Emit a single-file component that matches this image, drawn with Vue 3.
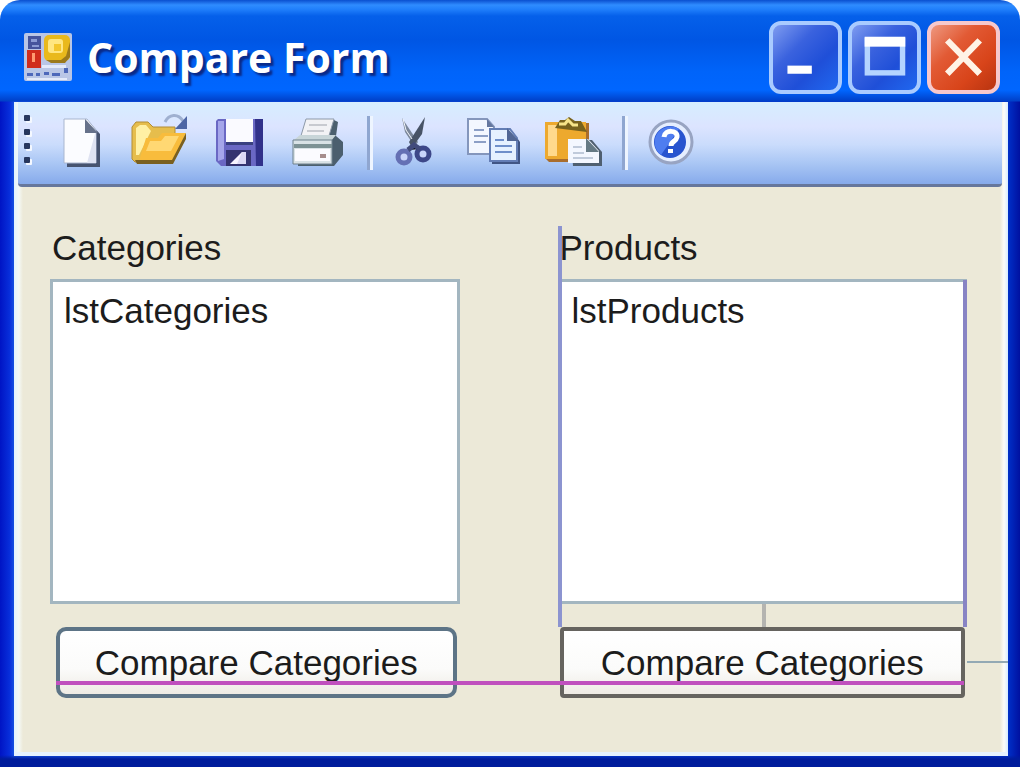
<script setup>
import { ref } from "vue";

const categories = ref(["lstCategories"]);
const products = ref(["lstProducts"]);
</script>

<template>
  <div class="window">
    <header class="title-bar">
      <svg class="app-icon" viewBox="0 0 48 48" aria-hidden="true">
        <rect width="48" height="48" rx="2" fill="#b9c6e6" />
        <rect x="4" y="3" width="13" height="13" fill="#46549c" />
        <path d="M7 6h6v3H7zM8 12h7v2H8z" fill="#8b9bd4" />
        <rect x="3" y="17" width="14" height="18" fill="#d02c1c" />
        <rect x="8" y="20" width="3" height="9" fill="#ff9a70" />
        <rect x="20" y="2" width="26" height="26" rx="5" fill="#e9b91c" />
        <path d="M22 27l5 3h14l5-6V9l-4 14-5 4z" fill="#9c7a1c" />
        <rect x="24" y="6" width="15" height="14" rx="3" fill="#ffe680" />
        <path d="M30 11h7v7h-7z" fill="#f3c62c" />
        <path
          d="M3 40h6v3H3zM12 40h4v3h-4zM20 39h5v3h-5zM28 40h8v3h-8zM40 35h4v5h-4z"
          fill="#4d68ba"
        />
        <path d="M18 32h24v3H18zM3 45h40v2H3z" fill="#e3eafa" />
      </svg>
      <h1 class="title">Compare Form</h1>
      <div class="window-controls">
        <button type="button" class="control" aria-label="Minimize">
          <svg viewBox="0 0 72 72">
            <rect x="16" y="45" width="27" height="9" fill="#fff" />
          </svg>
        </button>
        <button type="button" class="control" aria-label="Maximize">
          <svg viewBox="0 0 72 72">
            <rect
              x="17"
              y="17"
              width="39"
              height="36"
              fill="none"
              stroke="#b4d4ff"
              stroke-width="6"
            />
            <rect x="14" y="13" width="45" height="11" fill="#fff" />
          </svg>
        </button>
        <button type="button" class="control close" aria-label="Close">
          <svg viewBox="0 0 72 72">
            <path
              d="M18 17L54 54M54 17L18 54"
              stroke="#fff3e6"
              stroke-width="7"
            />
          </svg>
        </button>
      </div>
    </header>

    <div class="client">
      <div class="toolbar" role="toolbar">
        <span class="grip"><i></i><i></i><i></i><i></i></span>
        <button type="button" class="tool" aria-label="New">
          <svg viewBox="0 0 60 60">
            <path d="M16 9h22l11 12v33H16z" fill="#46536f" />
            <path d="M13 6h23l9 11v33H13z" fill="#fbfcff" stroke="#a9b6cf" />
            <path d="M36 50h9V17z" fill="#dfe3f2" />
            <path d="M34 6l13 14H34z" fill="#66718a" />
          </svg>
        </button>
        <button type="button" class="tool" aria-label="Open">
          <svg viewBox="0 0 60 60">
            <path
              d="M2 14l4-5h12l5 5h22v16L40 49H5l-3-3z"
              fill="#e6bd4c"
              stroke="#b28d34"
            />
            <path d="M6 15l4-3h6l5 6-6 12-6 12H6z" fill="#fff0a4" />
            <path d="M16 25h12l4-5h24L43 48H9z" fill="#f8bc3c" />
            <path d="M20 28h11l4-5h14l-8 15H16z" fill="#ffd873" />
            <path d="M5 47h37L56 20v6L43 51H7z" fill="#7a6020" />
            <path
              d="M35 9c4-8 13-9 18-1"
              fill="none"
              stroke="#9fb0d0"
              stroke-width="3"
            />
            <path d="M57 3v13H45z" fill="#4d65a5" />
          </svg>
        </button>
        <button type="button" class="tool" aria-label="Save">
          <svg viewBox="0 0 60 60">
            <path d="M9 6h45v47H12l-5-5V8z" fill="#6a68c4" />
            <path d="M46 6h8v47h-7z" fill="#31318a" />
            <path d="M9 8h6v38l-6 2z" fill="#a5a6ea" />
            <path d="M17 6h27v23H17z" fill="#fafaff" />
            <path d="M17 29h27v3H17z" fill="#394080" />
            <path d="M17 37h25v16H17z" fill="#34336f" />
            <path d="M33 39v12H21z" fill="#f7f4ff" />
            <path d="M33 39h4v12h-9z" fill="#dcd9f4" />
          </svg>
        </button>
        <button type="button" class="tool" aria-label="Print">
          <svg viewBox="0 0 60 60">
            <path d="M44 6l6 3-2 14 7 6v13L46 53H10v-4z" fill="#4b5f6e" />
            <path d="M18 6h28l-6 20H12z" fill="#f2f2f5" stroke="#8d99a8" />
            <path
              d="M21 12h18M19 18h17"
              stroke="#c8cad0"
              stroke-width="2"
            />
            <path d="M6 27l6-5h36l-5 6H6z" fill="#c8d5d8" />
            <path d="M5 27h39v24H5z" fill="#d9e2e6" stroke="#6f818d" />
            <path d="M6 31h38v4H6z" fill="#7d9295" />
            <path d="M7 36h35v12H7z" fill="#fbfbff" />
            <path d="M32 41h6v4h-6z" fill="#a68d8d" />
          </svg>
        </button>
        <span class="separator"></span>
        <button type="button" class="tool" aria-label="Cut">
          <svg viewBox="0 0 60 60">
            <path d="M17 5l3 14 10 15 3-5z" fill="#7b879a" />
            <path d="M40 4l-3 17-10 14-3-6z" fill="#485366" />
            <path d="M18 6l3 11 6 9" fill="none" stroke="#f2f5fa" />
            <circle
              cx="19"
              cy="44"
              r="6"
              fill="#c9d4fa"
              stroke="#6570b4"
              stroke-width="5"
            />
            <circle
              cx="38"
              cy="41"
              r="6"
              fill="#c9d4fa"
              stroke="#3d4789"
              stroke-width="5"
            />
            <path d="M23 37l6-5 6 4" stroke="#414b7c" stroke-width="5" />
          </svg>
        </button>
        <button type="button" class="tool" aria-label="Copy">
          <svg viewBox="0 0 60 60">
            <path
              d="M4 6h19l7 8v27H4z"
              fill="#f3f7ff"
              stroke="#8496bc"
              stroke-width="2"
            />
            <path d="M23 6v8h7" fill="#65779f" />
            <path
              d="M10 17h10M10 23h14M10 29h12"
              stroke="#8c9fc6"
              stroke-width="2"
            />
            <path d="M28 18h20l8 11v22H28z" fill="#405584" />
            <path
              d="M26 16h20l7 9v23H26z"
              fill="#e6f1ff"
              stroke="#637db5"
              stroke-width="2"
            />
            <path d="M43 15l12 13H43z" fill="#526795" />
            <path
              d="M31 27h9M31 33h17M31 39h17"
              stroke="#6f8fca"
              stroke-width="2"
            />
          </svg>
        </button>
        <button type="button" class="tool" aria-label="Paste">
          <svg viewBox="0 0 60 60">
            <path d="M3 10h43v39H6l-3-3z" fill="#a96d2c" />
            <path d="M2 9h41v37H2z" fill="#eda92e" />
            <path d="M5 12h9v31H5z" fill="#ffd98c" />
            <path d="M12 15l5-8h5l4-3 6 4h6l6 11z" fill="#77621d" />
            <path
              d="M16 11h6l3-4 5 5h5"
              fill="none"
              stroke="#f6e48a"
              stroke-width="3"
            />
            <path d="M28 27h21l10 12v14H30z" fill="#4f5f70" />
            <path d="M25 26h20l11 12v12H25z" fill="#f4f7ff" />
            <path d="M43 25l13 14H43z" fill="#657984" />
            <path
              d="M30 34h9M30 40h11M30 45h20"
              stroke="#c0cadb"
              stroke-width="2"
            />
          </svg>
        </button>
        <span class="separator"></span>
        <button type="button" class="tool" aria-label="Help">
          <svg viewBox="0 0 60 60">
            <circle
              cx="31"
              cy="29"
              r="21"
              fill="#e5eeff"
              stroke="#98a4c2"
              stroke-width="3"
            />
            <circle cx="30" cy="29" r="16" fill="#2854cf" />
            <path
              d="M17 21a16 16 0 0 1 22-5L21 42a16 16 0 0 1-4-21z"
              fill="#4f7df0"
            />
            <path
              d="M24 24c1-8 14-7 13 0c-1 5-6 4-6 9"
              fill="none"
              stroke="#fff"
              stroke-width="5"
            />
            <rect x="28" y="36" width="5" height="4" fill="#fff" />
          </svg>
        </button>
      </div>

      <main class="form">
        <section class="column">
          <label for="lstCategories">Categories</label>
          <select id="lstCategories" size="8" multiple>
            <option v-for="item in categories" :key="item">{{ item }}</option>
          </select>
          <button type="button" class="compare">Compare Categories</button>
        </section>
        <section class="column selected">
          <span class="guide guide-left"></span>
          <label for="lstProducts">Products</label>
          <select id="lstProducts" size="8" multiple>
            <option v-for="item in products" :key="item">{{ item }}</option>
          </select>
          <button type="button" class="compare">Compare Categories</button>
          <span class="guide guide-right"></span>
          <span class="guide guide-tick"></span>
          <span class="guide guide-margin"></span>
        </section>
        <span class="guide guide-baseline"></span>
      </main>
    </div>
  </div>
</template>

<style>
body {
  margin: 0;
  background: #fff;
}
</style>

<style scoped>
.window {
  display: flex;
  flex-direction: column;
  box-sizing: border-box;
  min-height: 100vh;
  padding: 0 12px 13px 14px;
  border-radius: 20px 20px 0 0;
  background:
    linear-gradient(
      #0a4fd0 0,
      #2f8cff 5px,
      #2180fc 9px,
      #0560ea 16px,
      #0056e4 40px,
      #0064fa 72px,
      #0066ff 90px,
      #0040c8 101px,
      transparent 102px
    ),
    linear-gradient(transparent calc(100% - 14px), #001c9c calc(100% - 10px)),
    linear-gradient(
      90deg,
      #0014c4 0,
      #0830dc 10px,
      #1450e0 14px,
      #0030c8 calc(100% - 12px),
      #0010a0 100%
    );
  font-family: "Liberation Sans", Arial, sans-serif;
}

button {
  margin: 0;
  padding: 0;
  font: inherit;
}

svg {
  display: block;
}

.title-bar {
  display: flex;
  align-items: center;
  box-sizing: border-box;
  height: 102px;
  padding: 12px 8px 0 10px;
}

.app-icon {
  width: 48px;
  height: 48px;
}

.title {
  flex: 1;
  margin: 0 0 0 15px;
  color: #fff;
  font-family: "Open Sans", "Noto Sans", sans-serif;
  font-size: 41px;
  font-weight: 700;
  line-height: 56px;
  white-space: nowrap;
  text-shadow: 3px 3px 2px #0a2a88;
}

.window-controls {
  display: flex;
  gap: 6px;
}

.control {
  box-sizing: border-box;
  width: 73px;
  height: 73px;
  border: 4px solid #a9cbff;
  border-radius: 12px;
  background: linear-gradient(
    135deg,
    #7f9cf0 0,
    #3a62de 35%,
    #1f4fd8 65%,
    #2068f0 100%
  );
}

.control svg {
  width: 100%;
  height: 100%;
}

.control.close {
  border-color: #f6c8cc;
  background: linear-gradient(
    135deg,
    #ee9880 0,
    #e25a34 35%,
    #d8441a 70%,
    #b83410 100%
  );
}

.client {
  display: flex;
  flex: 1;
  flex-direction: column;
  box-sizing: border-box;
  border-bottom: 4px solid #e6f2ff;
  background: linear-gradient(
    90deg,
    #e0f2ff 0,
    #f4f8f4 5px,
    #ece9d8 9px,
    #ece9d8 calc(100% - 8px),
    #fdfdfa calc(100% - 4px),
    #d8ecff 100%
  );
}

.toolbar {
  display: flex;
  align-items: center;
  box-sizing: border-box;
  height: 85px;
  margin: 0 6px 0 4px;
  border-bottom: 3px solid #66779c;
  border-radius: 0 0 4px 4px;
  background: linear-gradient(
    #d6eeff 0,
    #dce4ff 30%,
    #cadcfc 52%,
    #a9c6f4 75%,
    #86aaeb 100%
  );
}

.grip {
  display: flex;
  flex-direction: column;
  gap: 8px;
  width: 17px;
  padding: 0 0 8px 6px;
}

.grip i {
  width: 6px;
  height: 6px;
  border-radius: 1px;
  background: #27375e;
  box-shadow: 2px 2px 0 #f4f8ff;
}

.tool {
  display: flex;
  justify-content: center;
  width: 79px;
  border: 0;
  background: none;
}

.tool svg {
  width: 60px;
  height: 60px;
}

.separator {
  box-sizing: border-box;
  width: 6px;
  height: 54px;
  margin: 0 2px 0 10px;
  border-right: 3px solid #eef5ff;
  border-left: 3px solid #8fa6d0;
}

.form {
  position: relative;
  display: flex;
  gap: 98px;
  padding: 37px 41px 54px 36px;
}

.column {
  position: relative;
  display: flex;
  flex: 1;
  flex-direction: column;
  min-width: 0;
  color: #1c1c1c;
  font-size: 35px;
}

.column label {
  position: relative;
  margin-bottom: 7px;
  padding-left: 2px;
  line-height: 48px;
}

.column select {
  box-sizing: border-box;
  width: 100%;
  height: 325px;
  padding: 9px 0 0;
  overflow: hidden;
  border: 3px solid #a3b6c0;
  border-radius: 0;
  outline: none;
  background: #fff;
  color: #1c1c1c;
  font: inherit;
}

.column option {
  min-height: 0;
  padding: 0 11px;
}

.compare {
  height: 71px;
  margin: 23px 3px 0 6px;
  border: 4px solid #5d7486;
  border-radius: 10px;
  background: linear-gradient(#fff 0, #fbfbfa 60%, #eeebe4 100%);
  color: #1c1c1c;
  white-space: nowrap;
}

.selected .compare {
  margin: 23px 2px 0 2px;
  border-color: #66645f;
  border-radius: 4px;
}

.guide {
  position: absolute;
  pointer-events: none;
}

.guide-left {
  top: 2px;
  bottom: 71px;
  left: 0;
  width: 4px;
  background: #8c94d0;
}

.guide-right {
  top: 56px;
  right: 0;
  bottom: 71px;
  width: 4px;
  background: #8884c4;
}

.guide-tick {
  bottom: 71px;
  left: 50%;
  width: 4px;
  height: 23px;
  background: #b4b4b0;
}

.guide-margin {
  right: -41px;
  bottom: 35px;
  width: 41px;
  height: 2px;
  background: #93a9b4;
}

.guide-baseline {
  right: 44px;
  bottom: 67px;
  left: 42px;
  height: 4px;
  background: #c050be;
}
</style>
